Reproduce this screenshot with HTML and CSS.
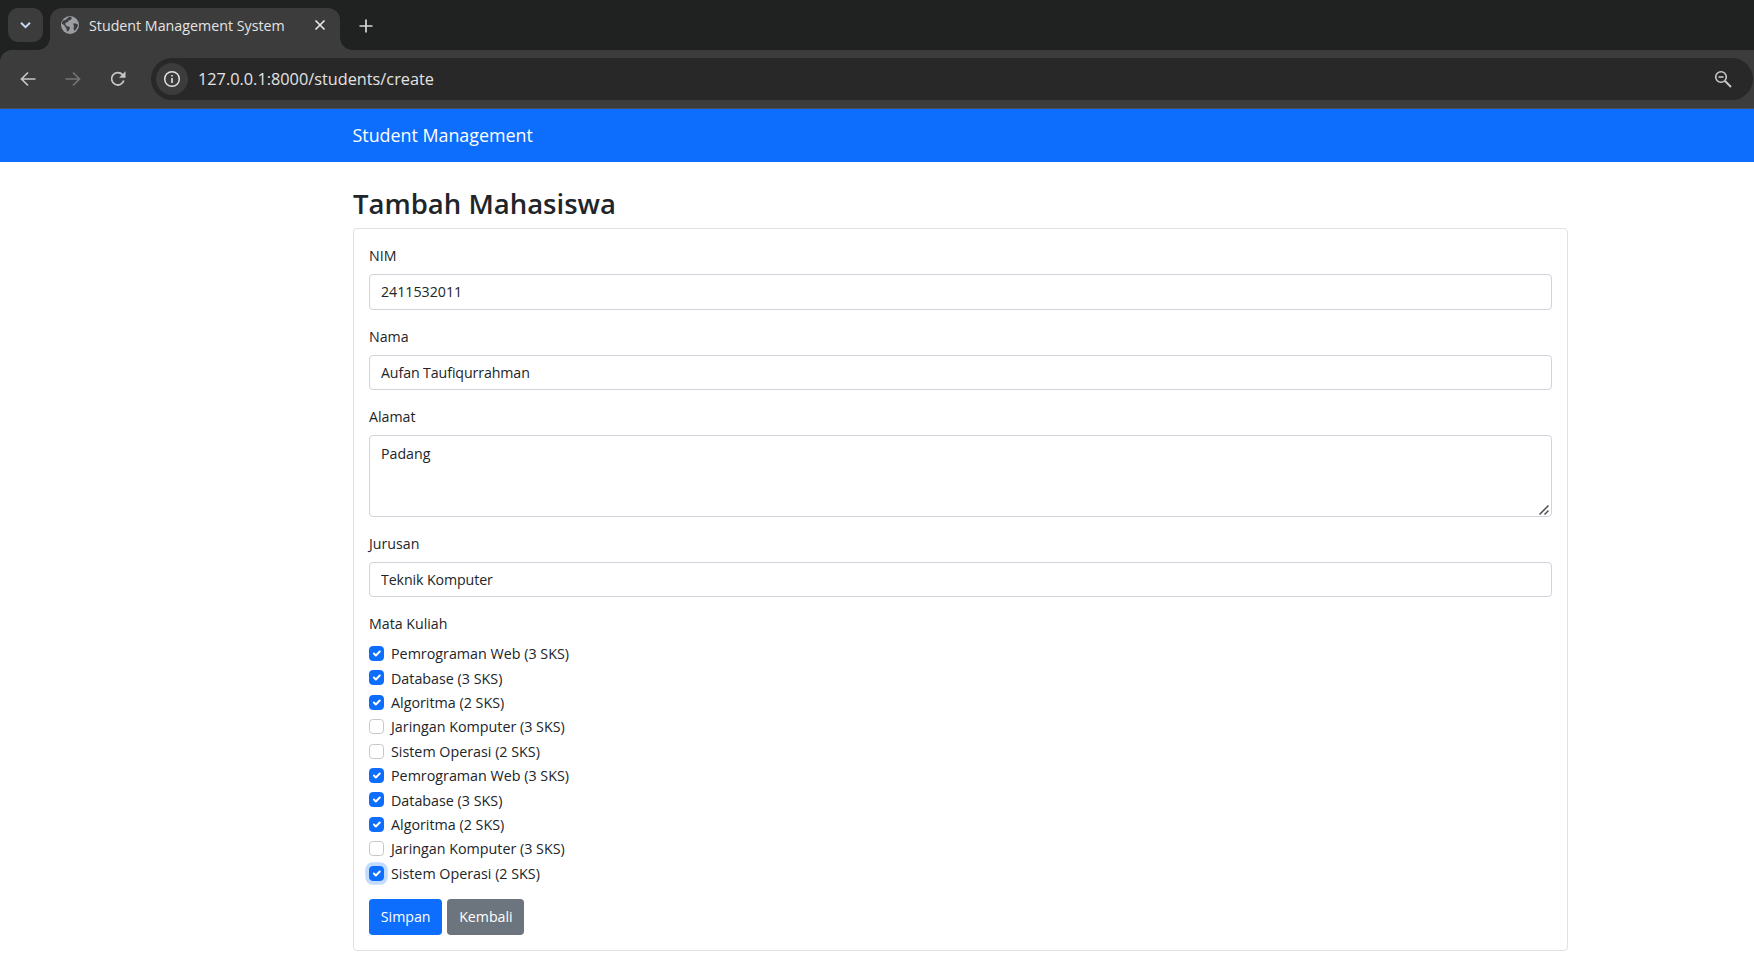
FILE: index.html
```html
<!DOCTYPE html>
<html lang="id">
<head>
<meta charset="utf-8">
<title>Student Management System</title>
<link rel="stylesheet" href="styles.css">
</head>
<body>
<header class="chrome">
  <div class="tabstrip">
    <div class="tab-search">
      <svg width="16" height="16" viewBox="0 0 16 16"><path d="M3 5.800 7.500 10.200l4.500-4.400" fill="none" stroke="#c7d7f5" stroke-width="2"/></svg>
    </div>
    <div class="tab">
      <svg class="favicon" width="18" height="18" viewBox="0 0 18 18"><circle cx="9" cy="9" r="9" fill="#9a9ea3"/><path d="M2 4.500c2 .3 3-.8 4.500-2.500L9 .5l2 1.500-1.500 2-2 .5-.5 1.500L5 6.500 4 8l2 2.500h2l1 1.500-1.500 3-1.500.5-.5-3L3 9 .8 7.500zM12 7.500h3l2.200 1.500-1.700 3.500-2 2.500-1-2.500.5-2.500z" fill="#3c3c3c"/></svg>
      <span class="tab-title">Student Management System</span>
      <svg class="tab-close" width="12" height="12" viewBox="0 0 12 12"><path d="M1.500 1.500l9 9M10.500 1.500l-9 9" stroke="#e6e6e6" stroke-width="1.700" fill="none"/></svg>
    </div>
    <svg class="new-tab" width="14" height="14" viewBox="0 0 14 14"><path d="M7 .5v13M.5 7h13" stroke="#d8d8d8" stroke-width="1.700" fill="none"/></svg>
  </div>
  <div class="toolbar">
    <svg class="tool" width="18" height="18" viewBox="0 0 18 18"><path d="M16.500 9H3M9 2.500 2.500 9 9 15.500" fill="none" stroke="#c4c7c5" stroke-width="1.700"/></svg>
    <svg class="tool dim" width="18" height="18" viewBox="0 0 18 18"><path d="M1.500 9H15M9 2.500 15.500 9 9 15.500" fill="none" stroke="#757575" stroke-width="1.700"/></svg>
    <svg class="tool" width="18" height="18" viewBox="0 0 18 18"><path d="M14.800 10.500A6.200 6.200 0 1 1 13.500 4.700L15.500 6.500" fill="none" stroke="#c4c7c5" stroke-width="1.800"/><path d="M16.500 1.300v6.500h-6.500z" fill="#c4c7c5"/></svg>
    <div class="omnibox">
      <span class="site-info">
        <svg width="18" height="18" viewBox="0 0 18 18"><circle cx="9" cy="9" r="7.300" fill="none" stroke="#e3e3e3" stroke-width="1.500"/><path d="M9 8v5M9 5v1.600" stroke="#e3e3e3" stroke-width="1.600" fill="none"/></svg>
      </span>
      <span class="url">127.0.0.1:8000/students/create</span>
      <svg class="zoom-icon" width="18" height="18" viewBox="0 0 18 18"><circle cx="7" cy="7" r="5.300" fill="none" stroke="#c8c8c8" stroke-width="1.600"/><path d="M4.500 7h5" stroke="#c8c8c8" stroke-width="1.600"/><path d="M11 11l6 6" stroke="#c8c8c8" stroke-width="1.900"/></svg>
    </div>
  </div>
</header>

<nav class="navbar"><span class="brand">Student Management</span></nav>

<main class="page">
  <h1 class="title">Tambah Mahasiswa</h1>
  <form class="card">
    <div class="group">
      <label class="label" for="nim">NIM</label>
      <input class="field" id="nim" type="text" value="2411532011">
    </div>
    <div class="group">
      <label class="label" for="nama">Nama</label>
      <input class="field" id="nama" type="text" value="Aufan Taufiqurrahman">
    </div>
    <div class="group">
      <label class="label" for="alamat">Alamat</label>
      <div class="area-wrap">
        <textarea class="field area" id="alamat">Padang</textarea>
        <svg class="grip" width="10" height="10" viewBox="0 0 10 10"><path d="M.5 9.500l9-9M5.500 9.500l4-4" stroke="#4f4f4f" stroke-width="1.500" fill="none"/></svg>
      </div>
    </div>
    <div class="group">
      <label class="label" for="jurusan">Jurusan</label>
      <input class="field" id="jurusan" type="text" value="Teknik Komputer">
    </div>
    <div class="group checks">
      <div class="label">Mata Kuliah</div>
      <label class="check"><input type="checkbox" checked><span>Pemrograman Web (3 SKS)</span></label>
      <label class="check"><input type="checkbox" checked><span>Database (3 SKS)</span></label>
      <label class="check"><input type="checkbox" checked><span>Algoritma (2 SKS)</span></label>
      <label class="check"><input type="checkbox"><span>Jaringan Komputer (3 SKS)</span></label>
      <label class="check"><input type="checkbox"><span>Sistem Operasi (2 SKS)</span></label>
      <label class="check"><input type="checkbox" checked><span>Pemrograman Web (3 SKS)</span></label>
      <label class="check"><input type="checkbox" checked><span>Database (3 SKS)</span></label>
      <label class="check"><input type="checkbox" checked><span>Algoritma (2 SKS)</span></label>
      <label class="check"><input type="checkbox"><span>Jaringan Komputer (3 SKS)</span></label>
      <label class="check"><input class="focused" type="checkbox" checked><span>Sistem Operasi (2 SKS)</span></label>
    </div>
    <div class="actions">
      <button class="btn primary" type="button">Simpan</button>
      <button class="btn secondary" type="button">Kembali</button>
    </div>
  </form>
</main>
</body>
</html>
```
FILE: styles.css
```css
* { box-sizing: border-box; }
html, body { margin: 0; padding: 0; }
body {
  width: 1754px;
  height: 965px;
  overflow: hidden;
  background: #fff;
  color: #212529;
  font-family: "Open Sans", "Noto Sans", sans-serif;
  font-size: 14.2px;
  line-height: 22.5px;
}

/* Browser chrome */
.chrome { background: #202221; }
.tabstrip {
  height: 50px;
  display: flex;
  align-items: flex-start;
  padding: 8px 0 0 8px;
}
.tab-search {
  width: 35px;
  height: 34px;
  border-radius: 10px;
  background: #3c3c3c;
  display: flex;
  align-items: center;
  justify-content: center;
}
.tab {
  position: relative;
  width: 290px;
  height: 42px;
  margin-left: 7px;
  padding: 0 14px 8px 11px;
  background: #3c3c3c;
  border-radius: 12px 12px 0 0;
  display: flex;
  align-items: center;
}
.tab::before, .tab::after {
  content: "";
  position: absolute;
  bottom: 0;
  width: 12px;
  height: 12px;
}
.tab::before { left: -12px; background: radial-gradient(circle at 0 0, transparent 11.5px, #3c3c3c 12px); }
.tab::after { right: -12px; background: radial-gradient(circle at 100% 0, transparent 11.5px, #3c3c3c 12px); }
.favicon { flex: none; }
.tab-title {
  flex: 1;
  margin: 1px 0 0 10px;
  color: #e3e3e3;
  font-size: 14.25px;
  line-height: 20px;
  white-space: nowrap;
}
.tab-close { flex: none; }
.new-tab { margin: 11px 0 0 19px; }
.toolbar {
  height: 59px;
  background: #3c3c3c;
  border-bottom: 1px solid #4a4f55;
  border-top-left-radius: 12px;
  display: flex;
  align-items: center;
  padding: 0 1px 1px 19px;
}
.tool { flex: none; margin-right: 27px; }
.tool:nth-of-type(3) { margin-right: 23.5px; }
.omnibox {
  flex: 1;
  height: 42px;
  background: #282828;
  border-radius: 21px;
  padding: 0 21px 0 5px;
  display: flex;
  align-items: center;
}
.site-info {
  width: 32px;
  height: 32px;
  border-radius: 50%;
  background: #3c3c3c;
  display: flex;
  align-items: center;
  justify-content: center;
}
.url {
  flex: 1;
  margin: 1px 0 0 10.5px;
  color: #e3e3e3;
  font-size: 16.3px;
  line-height: 24px;
}

/* Page */
.navbar {
  height: 53px;
  background: #0d6efd;
  padding: 0 0 2px 352.5px;
  display: flex;
  align-items: center;
}
.brand { color: #fff; font-size: 17.85px; line-height: 28px; }
.page { width: 1215px; margin-left: 353px; padding-top: 22.5px; }
.title {
  margin: 0 0 7.5px;
  padding-top: 1px;
  height: 36px;
  font-size: 27.5px;
  line-height: 36px;
  font-weight: 600;
}
.card {
  border: 1px solid #dee2e6;
  border-radius: 4px;
  padding: 15px;
}
.group { margin-bottom: 15px; }
.label { display: block; padding-top: 1px; margin-bottom: 6.5px; }
.field {
  display: block;
  width: 100%;
  height: 35.6px;
  padding: 5.6px 11px;
  border: 1px solid #ced4da;
  border-radius: 4px;
  background: #fff;
  color: #212529;
  font: inherit;
}
#nama, #jurusan { letter-spacing: -0.1px; }
.area-wrap { position: relative; }
.area { height: 81.5px; padding-top: 6.6px; resize: none; }
.grip { position: absolute; right: 3px; bottom: 2px; }
.checks { margin-bottom: 15px; }
.check {
  display: flex;
  align-items: flex-start;
  gap: 7px;
  min-height: 22.5px;
  margin-bottom: 1.9px;
}
.check span { margin: 1px 0 -1px; font-size: 14.3px; }
.check input {
  appearance: none;
  flex: none;
  width: 15px;
  height: 15px;
  margin: 3.75px 0 0;
  border: 1px solid #c5c8cb;
  border-radius: 3.750px;
  background: #fff center / contain no-repeat;
}
.check input:checked {
  border-color: #0d6efd;
  background-color: #0d6efd;
  background-image: url("data:image/svg+xml,%3csvg xmlns='http://www.w3.org/2000/svg' viewBox='0 0 20 20'%3e%3cpath fill='none' stroke='%23fff' stroke-linecap='round' stroke-linejoin='round' stroke-width='3' d='m6 10 3 3 6-6'/%3e%3c/svg%3e");
}
.check input.focused { box-shadow: 0 0 0 3.750px rgba(13, 110, 253, .25); }
.actions { display: flex; gap: 5px; }
.btn {
  height: 35.6px;
  padding: 0 10.8px;
  border: 1px solid transparent;
  border-radius: 3.750px;
  color: #fff;
  font: inherit;
}
.primary { background: #0d6efd; }
.secondary { background: #6c757d; }
```
